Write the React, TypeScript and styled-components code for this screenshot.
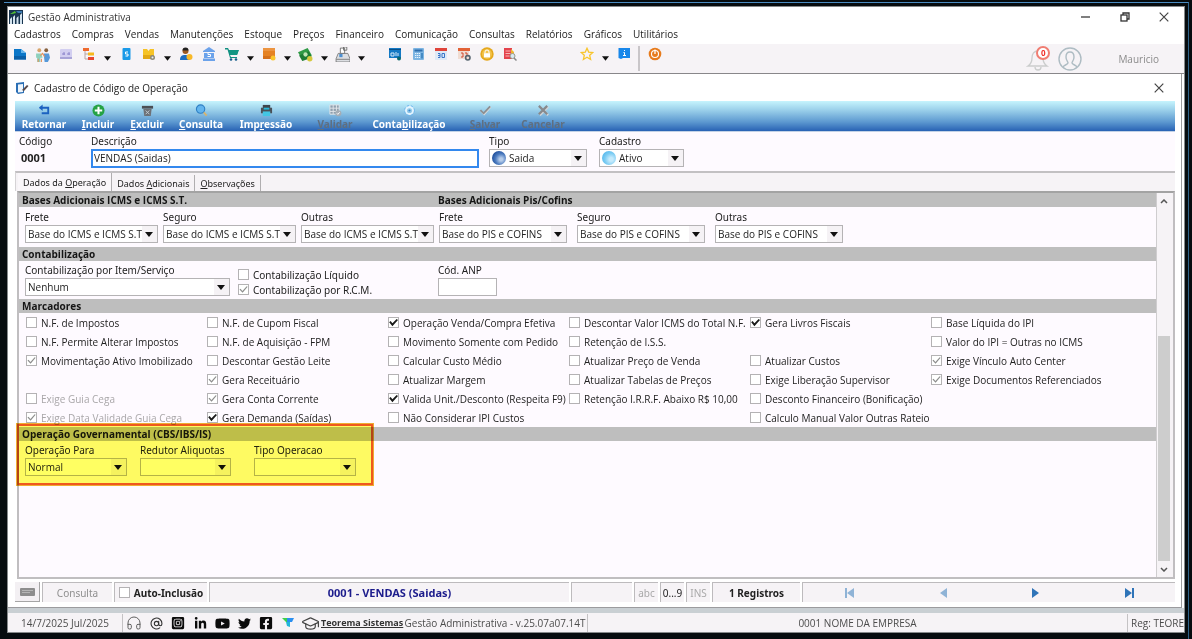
import React from "react";
import styled, { createGlobalStyle, css } from "styled-components";
import {
  FaLinkedinIn,
  FaYoutube,
  FaTwitter,
  FaFacebookSquare,
  FaInstagramSquare,
} from "react-icons/fa";
import { GraduationCap, Headphones, AtSign } from "lucide-react";

const FORM = '"Noto Sans", "Open Sans", sans-serif';
const SYSTEM = '"Open Sans", "Noto Sans", sans-serif';

const Global = createGlobalStyle`
  * { box-sizing: border-box; }
  body { margin: 0; background: #060c0f; color: #222; font: 10px/14px ${SYSTEM}; }
  button, input, select { font: inherit; color: inherit; margin: 0; padding: 0; border-radius: 0; }
  button { border: 0; background: none; }
  svg { display: block; flex: none; }
`;

/* ---------- frame ---------- */

const Desktop = styled.div`
  min-height: 100vh;
  padding: 2px 3px 0 4px;
  display: flex;
`;

const Bezel = styled.div`
  flex: 1;
  min-width: 0;
  display: flex;
  padding: 3px 3px 6px;
  border-top: 1px solid #4a8cc2;
  border-right: 1px solid #2f6288;
`;

const MainWindow = styled.div`
  flex: 1;
  min-width: 0;
  display: flex;
  flex-direction: column;
  background: #fff;
  border: 1px solid #85898b;
`;

const TitleBar = styled.header`
  display: flex;
  align-items: center;
  gap: 5px;
  height: 19px;
  padding: 0 15px 0 1px;
  color: #333;
`;

const Title = styled.h1`
  flex: 1;
  margin: 0;
  font: 400 10px/14px ${SYSTEM};
`;

const Controls = styled.div`
  display: flex;
  gap: 29px;
  color: #444;
`;

const MenuBar = styled.nav`
  display: flex;
  align-items: flex-start;
  gap: 11px;
  height: 18px;
  padding: 0 6px;
  line-height: 17px;
`;

const MenuItem = styled.button`
  white-space: nowrap;
`;

const ToolBar = styled.div`
  display: flex;
  height: 30px;
  padding-right: 25px;
  background: #f6f3f6;
  border-bottom: 1px solid #88878a;
`;

const Tool = styled.button`
  width: 23px;
  height: 20px;
  display: grid;
  place-items: center;
`;

const DropTool = styled.button`
  width: 14px;
  height: 28px;
  display: grid;
  place-items: center;
`;

const Spacer = styled.div<{ $w?: number }>`
  ${(p) => (p.$w ? `width: ${p.$w}px;` : "flex: 1;")}
`;

const ToolDivider = styled.div`
  width: 2px;
  height: 25px;
  margin: 2px 3px 0;
  background: #c9c6c9;
`;

const Account = styled.div`
  display: flex;
  align-items: center;
  gap: 8px;
  color: #8b8b8b;
`;

const BellWrap = styled.div`
  position: relative;
`;

const BellBadge = styled.span`
  position: absolute;
  top: 0;
  right: 0;
  width: 14px;
  height: 14px;
  border: 2px solid #f07d72;
  border-radius: 50%;
  background: #fff;
  color: #f0302a;
  font: 700 8px/10px ${SYSTEM};
  text-align: center;
`;

const UserName = styled.span`
  padding-left: 28px;
`;

/* ---------- child window ---------- */

const Child = styled.section`
  flex: 1;
  display: flex;
  flex-direction: column;
  margin-right: 2px;
  padding: 0 6px 5px 7px;
  border-right: 1px solid #9b9b9e;
  border-bottom: 1px solid #9b9b9e;
`;

const ChildTitle = styled.header`
  display: flex;
  align-items: center;
  gap: 5px;
  height: 27px;
  padding: 0 11px 0 0;
`;

const ActionBar = styled.div`
  display: flex;
  height: 31px;
  background: linear-gradient(#c6f4fd 0%, #9bd0ea 30%, #5c98d0 70%, #2862b4 100%);
  border-bottom: 1px solid #c3d2e6;
`;

const Action = styled.button<{ $w: number }>`
  width: ${(p) => p.$w}px;
  display: flex;
  flex-direction: column;
  align-items: center;
  padding-top: 3px;
  color: #fff;
  font: 700 10px/12px ${FORM};
  white-space: nowrap;
  &:disabled {
    color: #5f6f80;
  }
  svg {
    margin-bottom: 1px;
  }
`;

const Record = styled.div`
  display: flex;
  align-items: flex-start;
  height: 39px;
  padding: 2px 4px 0;
  background: #fefaff;
`;

const Field = styled.label<{ $w?: number }>`
  display: flex;
  flex-direction: column;
  ${(p) => p.$w && `width: ${p.$w}px;`}
  font-family: ${FORM};
  line-height: 15px;
  white-space: nowrap;
`;

const Code = styled.output`
  font: 700 11px/18px ${SYSTEM};
  padding-left: 2px;
`;

const DescInput = styled.input`
  width: 388px;
  height: 19px;
  padding: 0 1px 1px;
  border: 2px solid #3388ee;
  outline: 0;
  background: #fff;
  font-family: ${SYSTEM};
`;

const SelectBox = styled.span<{ $w: number }>`
  display: grid;
  grid-template-columns: auto 1fr 16px;
  align-items: center;
  width: ${(p) => p.$w}px;
  height: 18px;
  background: linear-gradient(to left, #f5f2f5 15px, #fff 15px);
  border: 1px solid #b5b3b5;
  > svg {
    grid-row: 1;
    grid-column: 3;
    justify-self: center;
    pointer-events: none;
  }
`;

const NativeSelect = styled.select<{ $pad: number }>`
  grid-row: 1;
  grid-column: 1 / -1;
  width: 100%;
  height: 16px;
  padding: 0 12px 0 ${(p) => p.$pad}px;
  appearance: none;
  border: 0;
  outline: 0;
  background: transparent;
  font-family: ${SYSTEM};
  line-height: 16px;
`;

const Ball = styled.span<{ $tone: string }>`
  grid-row: 1;
  grid-column: 1;
  width: 14px;
  height: 14px;
  margin-left: 2px;
  border-radius: 50%;
  background: ${(p) => p.$tone};
`;

/* ---------- tabs ---------- */

const Tabs = styled.div`
  display: flex;
  align-items: flex-end;
  height: 20px;
  padding-left: 2px;
  border-top: 2px solid #c2c0c2;
  border-left: 1px solid #d5d3d5;
  background: #f6f3f6;
`;

const Tab = styled.button<{ $active?: boolean }>`
  height: ${(p) => (p.$active ? 18 : 16)}px;
  padding: 0 5px;
  border-right: 1px solid #b0aeb0;
  font: 9px/15px ${FORM};
  white-space: nowrap;
  background: ${(p) => (p.$active ? "#faf7fa" : "transparent")};
`;

const Pane = styled.div`
  flex: 1;
  display: flex;
  margin-left: 2px;
  background: #fefaff;
  border: 2px solid #c0bec0;
  border-top-color: #a3a3a3;
`;

const Body = styled.div`
  flex: 1;
  min-width: 0;
  border-right: 1px solid #cfcdcf;
`;

const Bar = styled.h2`
  display: flex;
  height: 14px;
  margin: 0;
  padding-left: 3px;
  background: #bebebe;
  font: 700 10px/14px ${SYSTEM};
  color: #151515;
`;

const BarPart = styled.span<{ $w?: number }>`
  ${(p) => p.$w && `width: ${p.$w}px;`}
`;

const Row = styled.div<{ $h: number; $top?: number }>`
  display: flex;
  align-items: flex-start;
  height: ${(p) => p.$h}px;
  padding: ${(p) => p.$top || 2}px 0 0 6px;
`;

const CheckStack = styled.div`
  display: flex;
  flex-direction: column;
  width: 200px;
  padding-top: 4px;
  font-family: ${FORM};
`;

const CheckLabel = styled.label<{ $dim?: boolean; $tall?: boolean }>`
  display: flex;
  align-items: center;
  gap: 4px;
  height: ${(p) => (p.$tall ? 19 : 15)}px;
  white-space: nowrap;
  ${(p) => p.$dim && "color: #a9a7a9;"}
`;

const Box = styled.input<{ $grey?: boolean }>`
  appearance: none;
  flex: none;
  width: 11px;
  height: 11px;
  border: 1px solid #b4b2b4;
  background: #fff;
  display: grid;
  place-items: center;
  &:checked::after {
    content: "";
    width: 9px;
    height: 8px;
    background: ${(p) => (p.$grey ? "#8d8d8d" : "#1a1a1a")};
    clip-path: ${(p) =>
      p.$grey
        ? "polygon(5% 50%, 17% 40%, 38% 68%, 85% 8%, 96% 16%, 40% 92%)"
        : "polygon(2% 48%, 18% 32%, 38% 58%, 85% 5%, 100% 18%, 38% 98%)"};
  }
`;

const Marks = styled.div`
  display: grid;
  grid-template-columns: repeat(6, 181px);
  grid-auto-rows: 19px;
  padding-left: 7px;
`;

const Gov = styled.section`
  position: relative;
`;

const Highlight = styled.div`
  position: absolute;
  left: -3px;
  top: -4px;
  width: 358px;
  height: 63px;
  border: 1px solid #f0b030;
  box-shadow: inset 0 0 0 2px #f05a1e;
  background: #ffff62;
  mix-blend-mode: multiply;
  pointer-events: none;
`;

const Scroll = styled.div`
  width: 16px;
  padding-right: 2px;
  display: flex;
  flex-direction: column;
  background: #f6f3f6;
`;

const ScrollButton = styled.button`
  height: 16px;
  display: grid;
  place-items: center;
`;

const Track = styled.div`
  flex: 1;
  display: flex;
  flex-direction: column;
  justify-content: flex-end;
`;

const Thumb = styled.div`
  height: 64%;
  margin: 0 1px;
  background: #cdcdcd;
`;

/* ---------- footer bars ---------- */

const RecordBar = styled.div`
  display: flex;
  gap: 2px;
  height: 20px;
  margin-top: 3px;
`;

const sunken = css`
  border-top: 1px solid #bdbbbd;
  border-left: 1px solid #bdbbbd;
  background: #f6f3f6;
`;

const Cell = styled.div<{ $w: number; $tone?: string; $bold?: boolean; $large?: boolean }>`
  ${sunken}
  width: ${(p) => p.$w}px;
  display: flex;
  align-items: center;
  justify-content: center;
  color: ${(p) => p.$tone || "#222"};
  font-family: ${FORM};
  font-size: ${(p) => (p.$large ? 11 : 10)}px;
  font-weight: ${(p) => (p.$bold ? 700 : 400)};
  white-space: nowrap;
`;

const KeyButton = styled.button`
  width: 25px;
  display: grid;
  place-items: center;
  background: #f3f0f3;
  border-right: 1px solid #a5a5a5;
  border-bottom: 1px solid #a5a5a5;
`;

const Nav = styled.div`
  ${sunken}
  flex: 1;
  display: grid;
  grid-template-columns: repeat(4, 1fr);
  place-items: center;
`;

const StatusBar = styled.footer`
  display: flex;
  height: 24px;
  padding-top: 1px;
  align-items: center;
  border-top: 5px solid #c9cfd3;
  background: #f6f3f6;
  color: #4c4c4c;
  white-space: nowrap;
  overflow: hidden;
`;

const StatusCell = styled.div<{ $w?: number }>`
  ${(p) => (p.$w ? `width: ${p.$w}px;` : "flex: 1;")}
  flex-shrink: 0;
  height: 18px;
  line-height: 18px;
  text-align: center;
  border-right: 1px solid #c4c2c4;
`;

const Social = styled.div`
  display: grid;
  grid-template-columns: repeat(9, 22px);
  place-items: center;
  color: #0c0c0c;
  a {
    color: inherit;
  }
`;

const Brand = styled.a`
  width: 82px;
  flex: none;
  color: #333;
  font-size: 9px;
  font-weight: 700;
`;

const AnpInput = styled.input`
  width: 59px;
  height: 18px;
  border: 1px solid #b5b3b5;
  background: #fff;
`;

const Registration = styled.span`
  width: 56px;
  flex: none;
  padding-left: 3px;
`;

/* ---------- drawings ---------- */

const Caret = ({ w = 8 }: { w?: number }) => (
  <svg width={w} height="5" viewBox="0 0 8 5"><path d="M0 0h8L4 5z" fill="#111" /></svg>
);

const Cross = () => (
  <svg width="10" height="10" viewBox="0 0 10 10" fill="none" stroke="#444" strokeWidth="1.200"><path d="M.7.7l8.600 8.600M9.300.7L.7 9.300" /></svg>
);

const I = ({ children, s = 14 }: { children: React.ReactNode; s?: number }) => (
  <svg width={s} height={s} viewBox="0 0 14 14">{children}</svg>
);

const AppLogo = () => (
  <svg width="14" height="14" viewBox="0 0 14 14">
    <rect width="14" height="14" fill="#17344f" />
    <path d="M1 14V9l2-2v7zM4 14V7l2-2v9zM7.500 14V8l2-2v8zM11 14V5l2-2v11z" fill="#d5e4ef" />
    <path d="M1 4l5-3 1 2-4 1z" fill="#52c234" />
    <path d="M7 1h6v2H9z" fill="#3b7ab0" />
  </svg>
);

const icons = {
  page: <I><path d="M1 2h7l5 4v6.500H1z" fill="#0b76c8" /><path d="M8 2l5 4H8z" fill="#65b5ec" /><path d="M1 9h12v3.500H1z" fill="#0a5fa8" /></I>,
  people: <I s={15}><circle cx="4" cy="3" r="1.800" fill="#d8a46a" /><circle cx="10.500" cy="3" r="1.800" fill="#87613f" /><path d="M1 6h5l1 4H5v4H2v-4H1z" fill="#8fd0bd" /><path d="M8 6h5l1 4-2 4H9z" fill="#5698d8" /><path d="M5 8l2-2 2 3M3 11v3M6 11v3" stroke="#e8925a" fill="none" /></I>,
  card: <I><rect x="1" y="2" width="12" height="10" rx="1" fill="#d2cef0" /><path d="M1 11h12" stroke="#9a94cf" strokeWidth="1.500" /><path d="M3 7h3M8 7h3M5 5v3M10 5v3" stroke="#8c84cb" /></I>,
  tree: <I><path d="M3 3v9h4M3 7h5" stroke="#b7a4a0" fill="none" /><rect x="1" y="1" width="6" height="3" fill="#ef6a2e" /><rect x="6" y="5.500" width="6" height="3" fill="#f6b91c" /><rect x="6" y="10" width="6" height="3" fill="#e8472f" /></I>,
  phone: <I><rect x="3.500" y="1" width="8" height="12" rx="1" fill="#1a9ae8" /><path d="M9 5H6.500v2H9v2H6.500" stroke="#fff" fill="none" /></I>,
  box: <I><path d="M1 2h4l1.500 2L8 2h4v10H1z" fill="#f6c326" /><path d="M1 8h11v4H1z" fill="#e2a714" /><circle cx="10.500" cy="10.500" r="2.500" fill="#8d8a78" /><circle cx="10.500" cy="10.500" r="1" fill="#eee" /></I>,
  user: <I><circle cx="6.500" cy="4" r="3" fill="#9c5a21" /><path d="M3.500 3.500a3 3 0 016 0z" fill="#222" /><path d="M1 13c0-4 2-5 5-5s5 1 5 5z" fill="#1c6dc0" /><circle cx="10.500" cy="10" r="3" fill="#f8b928" /></I>,
  bank: <I><path d="M1 4l6-4 6 4v1H1zM2 6h10v5H2zM1 11.500h12V14H1z" fill="#6ba2ea" /><path d="M8.500 5.500H6v2h2.500v2H5.500" stroke="#fff" fill="none" /></I>,
  cart: <I><path d="M0 1h3l1 2h10l-2 5H5L6 10h6v1H5L2.500 2.500H0z" fill="#0f8f80" /><path d="M4 3h9.500L12 8H5z" fill="#129583" /><circle cx="6" cy="12.500" r="1.300" fill="#155d8a" /><circle cx="11" cy="12.500" r="1.300" fill="#155d8a" /></I>,
  crate: <I><rect x="1" y="1" width="12" height="11" rx="1" fill="#e58224" /><path d="M1 9h12v3H1z" fill="#d4701c" /><path d="M1 1h12v3H1z" fill="#ec9440" /><circle cx="11" cy="11" r="2.500" fill="#fbc52d" /></I>,
  cash: <I s={15}><path d="M0 5l9-4 4 7-9 4z" fill="#2f9a45" /><path d="M1 8l9-4 3 6-9 3z" fill="#1d7c33" /><circle cx="7" cy="7" r="2" fill="#bfe6b5" /><circle cx="11" cy="11" r="2.500" fill="#d5c83c" /></I>,
  register: <I s={15}><path d="M5 1h4v5H5zM8 0h3v3H8z" fill="#fff" stroke="#555" strokeWidth=".7" /><path d="M3 6h9l2 5v3H1v-3z" fill="#dcdee2" stroke="#666" strokeWidth=".7" /><path d="M4 6.500h3v3H4z" fill="#4d8fd0" /><path d="M1 11.500h13" stroke="#888" /></I>,
  sys: <I><rect x="1" y="1" width="12" height="10" fill="#1479c4" /><path d="M1 2.500h12" stroke="#0a4f88" /><path d="M3 6h3v3H3zM8 5v4M10 6v3" stroke="#d5ebfa" fill="none" /><circle cx="11" cy="11.500" r="2" fill="#0c6870" /></I>,
  calc: <I><rect x="2" y="1" width="11" height="12" rx="1" fill="#7db5e2" /><rect x="3.500" y="2.500" width="8" height="2" fill="#2e6fae" /><path d="M4 6.500h5M4 8.500h5M4 10.500h5" stroke="#e4f3ff" strokeDasharray="1.300 .6" /><path d="M11 6v5.500" stroke="#2d77b8" strokeWidth="1.400" /></I>,
  cal: <I><path d="M1 3h12v10H1z" fill="#dfe9f6" /><path d="M1 1h12v3H1z" fill="#e0443a" /><path d="M4 6.500h2v4H4M6 8.500H4M8 6.500h2.500v4H8z" stroke="#3874c8" fill="none" /></I>,
  calgear: <I><path d="M1 3h11v9H1z" fill="#f0dcd2" /><path d="M1 1h12v3H1z" fill="#e26236" /><path d="M4 6h2v4H4M8 6h2v3" stroke="#d04b2e" fill="none" /><circle cx="10.800" cy="10.800" r="2.200" fill="none" stroke="#56646e" strokeWidth="1.600" /></I>,
  lock: <I><circle cx="7" cy="7" r="6.700" fill="#e5a81c" /><circle cx="7" cy="7" r="5" fill="#f2c34c" /><rect x="4" y="6.200" width="6" height="4.200" fill="#fff" /><path d="M5 6V5a2 2 0 014 0v1" stroke="#fff" fill="none" /></I>,
  search: <I><path d="M1 1h8v11H1z" fill="#e4434d" /><path d="M2.500 4h5M2.500 6.500h5M2.500 9h4" stroke="#f9b6b6" /><path d="M8 2l3 3v4H8z" fill="#f0b52d" /><circle cx="9.500" cy="9" r="2.500" fill="#d8e8f3" stroke="#998" /><path d="M11 11l2.500 2.500" stroke="#888" strokeWidth="1.500" /></I>,
  star: <I><path d="M7 1.300l1.700 3.800 4 .4-3 2.800.9 4.200L7 10.300l-3.600 2.200.9-4.200-3-2.800 4-.4z" fill="none" stroke="#f8c52c" strokeWidth="1.300" /></I>,
  info: <I><path d="M1.500 1h11.500v10H6l-2 1-2.500-1z" fill="#1887ea" /><path d="M6.500 5.500h1v3M6 8.500h3M7.500 3v1" stroke="#fff" fill="none" /></I>,
  power: <I><circle cx="7" cy="7" r="6.300" fill="#e77b1c" /><circle cx="7" cy="7" r="3.500" fill="none" stroke="#fff" strokeWidth="1.100" /><path d="M7 2.500V7" stroke="#fff" strokeWidth="1.300" /></I>,
};

const actionIcons = {
  back: <I s={13}><path d="M2 4h9v6H4" fill="none" stroke="#1c62c0" strokeWidth="2" /><path d="M1 4l4-3.500v7z" fill="#1c62c0" /></I>,
  add: <I s={13}><circle cx="7" cy="7" r="6.500" fill="#25a244" /><path d="M7 3v8M3 7h8" stroke="#fff" strokeWidth="2.200" /></I>,
  bin: <I s={13}><path d="M1 2h12v3H1z" fill="#4b4f54" /><path d="M2.500 5h9l-1 8h-7z" fill="#6d7177" /><path d="M5 7l4 4M9 7l-4 4" stroke="#c3cdd5" /></I>,
  find: <I s={13}><circle cx="6" cy="5.500" r="4.500" fill="#63b5ee" stroke="#2d7fc4" strokeWidth="1.200" /><path d="M9.500 9l3 3.500" stroke="#d7b36c" strokeWidth="2" /></I>,
  print: <I s={13}><path d="M3 1h8v4H3z" fill="#3e454c" /><path d="M1 4h12v6H1z" fill="#4a5057" /><path d="M4 4h6v2H4z" fill="#25b7d9" /><path d="M3 8h8v5H3z" fill="#43c6e4" /></I>,
  grid: <I s={13}><path d="M1 1h10v10H1z" fill="#8fa0ae" /><path d="M1 1h10v10H1zM1 4.500h10M1 8h10M4.500 1v10M8 1v10" fill="none" stroke="#e2e6ea" /><circle cx="10" cy="10" r="3.300" fill="#a5adb5" /><path d="M8.500 10l1 1.200 2-2.300" stroke="#fff" fill="none" /></I>,
  gear: <I s={13}><circle cx="7" cy="7" r="3.800" fill="none" stroke="#e4f4ff" strokeWidth="2" /><circle cx="7" cy="7" r="5.400" fill="none" stroke="#6cb4ee" strokeDasharray="2.200 2.200" /><circle cx="7" cy="7" r="1.200" fill="#3c87d0" /></I>,
  ok: <I s={13}><path d="M2 7l3.500 4L12.500 3" fill="none" stroke="#dcdcdc" strokeWidth="2" /><path d="M1.500 6.500L5 10 12 2.500" fill="none" stroke="#8c8f92" strokeWidth="2" /></I>,
  no: <I s={13}><path d="M3 3l9 9M12 3l-9 9" stroke="#d4d6d8" strokeWidth="2.400" /><path d="M2 2l9 9M11 2l-9 9" stroke="#878a8d" strokeWidth="2.400" /></I>,
};

/* ---------- data ---------- */

const menus = ["Cadastros", "Compras", "Vendas", "Manutenções", "Estoque", "Preços", "Financeiro", "Comunicação", "Consultas", "Relatórios", "Gráficos", "Utilitários"];

/* "v" is a drop-down arrow, a number is an empty stretch */
type ToolEntry = keyof typeof icons | "v" | number;
const tools: ToolEntry[] = ["page", "people", "card", "tree", "v", "phone", "box", "v", "user", "bank", "cart", "v", "crate", "v", "cash", "v", "register", "v", 15, "sys", "calc", "cal", "calgear", "lock", "search", 54, "star", "v", "info"];

const actions: [string, number, number, keyof typeof actionIcons, boolean][] = [
  ["Retornar", -1, 58, "back", false],
  ["Incluir", 0, 50, "add", false],
  ["Excluir", 0, 48, "bin", false],
  ["Consulta", 0, 60, "find", false],
  ["Impressão", 3, 70, "print", false],
  ["Validar", 0, 68, "grid", true],
  ["Contabilização", 5, 80, "gear", false],
  ["Salvar", 0, 72, "ok", true],
  ["Cancelar", -1, 44, "no", true],
];

/* off: empty, on: ticked, grey: inherited tick; "dim" variants are unavailable */
type State = "off" | "on" | "grey" | "dimOff" | "dimOn";
const marks: ([string, State] | null)[] = [
  ["N.F. de Impostos", "off"], ["N.F. de Cupom Fiscal", "off"], ["Operação Venda/Compra Efetiva", "on"], ["Descontar Valor ICMS do Total N.F.", "off"], ["Gera Livros Fiscais", "on"], ["Base Líquida do IPI", "off"],
  ["N.F. Permite Alterar Impostos", "off"], ["N.F. de Aquisição - FPM", "off"], ["Movimento Somente com Pedido", "off"], ["Retenção de I.S.S.", "off"], null, ["Valor do IPI = Outras no ICMS", "off"],
  ["Movimentação Ativo Imobilizado", "grey"], ["Descontar Gestão Leite", "off"], ["Calcular Custo Médio", "off"], ["Atualizar Preço de Venda", "off"], ["Atualizar Custos", "off"], ["Exige Vínculo Auto Center", "grey"],
  null, ["Gera Receituário", "grey"], ["Atualizar Margem", "off"], ["Atualizar Tabelas de Preços", "off"], ["Exige Liberação Supervisor", "off"], ["Exige Documentos Referenciados", "grey"],
  ["Exige Guia Cega", "dimOff"], ["Gera Conta Corrente", "grey"], ["Valida Unit./Desconto (Respeita F9)", "on"], ["Retenção I.R.R.F. Abaixo R$ 10,00", "off"], ["Desconto Financeiro (Bonificação)", "off"], null,
  ["Exige Data Validade Guia Cega", "dimOn"], ["Gera Demanda (Saídas)", "on"], ["Não Considerar IPI Custos", "off"], null, ["Calculo Manual Valor Outras Rateio", "off"], null,
];

const bases: [string, string, number][] = [
  ["Frete", "Base do ICMS e ICMS S.T", 133],
  ["Seguro", "Base do ICMS e ICMS S.T", 133],
  ["Outras", "Base do ICMS e ICMS S.T", 133],
  ["Frete", "Base do PIS e COFINS", 128],
  ["Seguro", "Base do PIS e COFINS", 128],
  ["Outras", "Base do PIS e COFINS", 128],
];

/* ---------- pieces ---------- */

const Hot = ({ text, at }: { text: string; at: number }) =>
  at < 0 ? <span>{text}</span> : <span>{text.slice(0, at)}<u>{text[at]}</u>{text.slice(at + 1)}</span>;

const Combo = ({ w, value, ball }: { w: number; value: string; ball?: string }) => (
  <SelectBox $w={w}>
    {ball && <Ball $tone={ball} />}
    <NativeSelect $pad={ball ? 19 : 2} defaultValue={value}>
      <option>{value}</option>
    </NativeSelect>
    <Caret />
  </SelectBox>
);

const Check = ({ text, state, tall }: { text: string; state: State; tall?: boolean }) => (
  <CheckLabel $dim={state.startsWith("dim")} $tall={tall}>
    <Box type="checkbox" defaultChecked={/on|grey|On/.test(state)} $grey={state !== "on"} disabled={state.startsWith("dim")} />
    {text}
  </CheckLabel>
);

const NavArrow = ({ back, edge }: { back?: boolean; edge?: boolean }) => (
  <svg width="10" height="10" viewBox="0 0 10 10" fill={back ? "#8fb3d6" : "#2f74b8"}>
    {back ? <path d="M9 0v10L2 5z" /> : <path d="M1 0v10l7-5z" />}
    {edge && <rect x={back ? 0 : 8} width="2" height="10" />}
  </svg>
);

export default function App() {
  return (
    <>
      <Global />
      <Desktop>
        <Bezel>
          <MainWindow>
            <TitleBar>
              <AppLogo />
              <Title>Gestão Administrativa</Title>
              <Controls>
                <button aria-label="Minimizar"><svg width="10" height="10" viewBox="0 0 10 10"><path d="M0 5h9" stroke="#555" strokeWidth="1.500" /></svg></button>
                <button aria-label="Restaurar"><svg width="10" height="10" viewBox="0 0 10 10" fill="none" stroke="#333" strokeWidth="1.300"><rect x="1" y="3" width="6" height="6" /><path d="M3 3V1h6v6H7" /></svg></button>
                <button aria-label="Fechar"><Cross /></button>
              </Controls>
            </TitleBar>
            <MenuBar>{menus.map((m) => <MenuItem key={m}>{m}</MenuItem>)}</MenuBar>
            <ToolBar>
              {tools.map((t, i) =>
                typeof t === "number" ? <Spacer key={i} $w={t} /> :
                t === "v" ? <DropTool key={i} aria-label="Mais opções"><Caret w={7} /></DropTool> :
                <Tool key={i} aria-label={t}>{icons[t]}</Tool>
              )}
              <ToolDivider />
              <Tool aria-label="Sair">{icons.power}</Tool>
              <Spacer />
              <Account>
                <BellWrap>
                  <svg width="24" height="26" viewBox="0 0 24 26" fill="none" stroke="#cbcdcd" strokeWidth="1.300"><path d="M2 20c3-2 4-4 4-8s2-7 6-7 5 3 5 7 1 6 4 8zM9 21a3 3 0 006 0" /></svg>
                  <BellBadge>0</BellBadge>
                </BellWrap>
                <svg width="24" height="24" viewBox="0 0 24 24" fill="none" stroke="#aebcc3" strokeWidth="1.400"><circle cx="12" cy="12" r="11" /><path d="M5 20c1-2 4-2 5-4 0-2-2-2-2-6 0-3 1-5 4-5s4 2 4 5c0 4-2 4-2 6 1 2 4 2 5 4" /></svg>
                <UserName>Mauricio</UserName>
              </Account>
            </ToolBar>

            <Child>
              <ChildTitle>
                <svg width="14" height="14" viewBox="0 0 14 14"><path d="M1 2l8-1v11l-6 1-2-2z" fill="#2b6fb5" /><path d="M3 3.500l5-.5v8l-5 .5z" fill="#eef5fb" /><path d="M7 9l5-5 1.500 1L9 10z" fill="#5a4a48" /></svg>
                <Title as="h2">Cadastro de Código de Operação</Title>
                <button aria-label="Fechar cadastro"><Cross /></button>
              </ChildTitle>
              <ActionBar>
                {actions.map(([text, at, w, icon, off]) => (
                  <Action key={text} $w={w} disabled={off}>{actionIcons[icon]}<Hot text={text} at={at} /></Action>
                ))}
              </ActionBar>
              <Record>
                <Field $w={72}>Código<Code>0001</Code></Field>
                <Field $w={398}>Descrição<DescInput defaultValue="VENDAS (Saidas)" /></Field>
                <Field $w={110}>Tipo<Combo w={98} value="Saida" ball="radial-gradient(circle at 65% 60%, #b7cdea 0 12%, #4d7cc0 45%, #1f4f9c 75%)" /></Field>
                <Field>Cadastro<Combo w={85} value="Ativo" ball="radial-gradient(circle at 65% 60%, #c5eafc 0 15%, #7cccf3 50%, #55b8ec 80%)" /></Field>
              </Record>
              <Tabs role="tablist">
                <Tab role="tab" $active><Hot text="Dados da Operação" at={9} /></Tab>
                <Tab role="tab"><Hot text="Dados Adicionais" at={6} /></Tab>
                <Tab role="tab"><Hot text="Observações" at={0} /></Tab>
              </Tabs>
              <Pane>
                <Body>
                  <Bar><BarPart $w={416}>Bases Adicionais ICMS e ICMS S.T.</BarPart><BarPart>Bases Adicionais Pis/Cofins</BarPart></Bar>
                  <Row $h={40} $top={3}>
                    {bases.map(([label, value, w], i) => (
                      <Field key={i} $w={138}>{label}<Combo w={w} value={value} /></Field>
                    ))}
                  </Row>
                  <Bar>Contabilização</Bar>
                  <Row $h={38}>
                    <Field $w={213}>Contabilização por Item/Serviço<Combo w={205} value="Nenhum" /></Field>
                    <CheckStack>
                      <Check text="Contabilização Líquido" state="off" />
                      <Check text="Contabilização por R.C.M." state="grey" />
                    </CheckStack>
                    <Field>Cód. ANP<AnpInput /></Field>
                  </Row>
                  <Bar>Marcadores</Bar>
                  <Marks>
                    {marks.map((m, i) => (m ? <Check key={i} text={m[0]} state={m[1]} tall /> : <span key={i} />))}
                  </Marks>
                  <Gov>
                    <Bar>Operação Governamental (CBS/IBS/IS)</Bar>
                    <Row $h={39}>
                      <Field $w={115}>Operação Para<Combo w={102} value="Normal" /></Field>
                      <Field $w={114}>Redutor Aliquotas<Combo w={91} value="" /></Field>
                      <Field>Tipo Operacao<Combo w={102} value="" /></Field>
                    </Row>
                    <Highlight />
                  </Gov>
                </Body>
                <Scroll>
                  <ScrollButton aria-label="Subir"><svg width="8" height="5" viewBox="0 0 8 5"><path d="M1 4l3-3 3 3" fill="none" stroke="#555" strokeWidth="1.500" /></svg></ScrollButton>
                  <Track><Thumb /></Track>
                  <ScrollButton aria-label="Descer"><svg width="8" height="5" viewBox="0 0 8 5"><path d="M1 1l3 3 3-3" fill="none" stroke="#555" strokeWidth="1.500" /></svg></ScrollButton>
                </Scroll>
              </Pane>
              <RecordBar>
                <KeyButton aria-label="Teclado"><svg width="15" height="8" viewBox="0 0 15 8"><rect width="15" height="8" rx="1" fill="#8d8d8d" /><path d="M2 2.500h11M2 4.500h8" stroke="#b5b5b5" /></svg></KeyButton>
                <Cell $w={70} $tone="#8f8f8f">Consulta</Cell>
                <Cell $w={93} $bold><CheckLabel><Box type="checkbox" />Auto-Inclusão</CheckLabel></Cell>
                <Cell $w={360} $bold $large $tone="#1c1c8c">0001 - VENDAS (Saidas)</Cell>
                <Cell $w={61} />
                <Cell $w={24} $tone="#a8a8a8">abc</Cell>
                <Cell $w={24}>0...9</Cell>
                <Cell $w={24} $tone="#a8a8a8">INS</Cell>
                <Cell $w={88} $bold>1 Registros</Cell>
                <Nav>
                  <button aria-label="Primeiro"><NavArrow back edge /></button>
                  <button aria-label="Anterior"><NavArrow back /></button>
                  <button aria-label="Próximo"><NavArrow /></button>
                  <button aria-label="Último"><NavArrow edge /></button>
                </Nav>
              </RecordBar>
            </Child>

            <StatusBar>
              <StatusCell $w={115}>14/7/2025 Jul/2025</StatusCell>
              <Social>
                <a href="#suporte" aria-label="Suporte"><Headphones size={16} strokeWidth={1.4} color="#555" /></a>
                <a href="#email" aria-label="E-mail"><AtSign size={13} strokeWidth={2} color="#333" /></a>
                <a href="#instagram" aria-label="Instagram"><FaInstagramSquare size={14} /></a>
                <a href="#linkedin" aria-label="LinkedIn"><FaLinkedinIn size={13} /></a>
                <a href="#youtube" aria-label="YouTube"><FaYoutube size={15} /></a>
                <a href="#twitter" aria-label="Twitter"><FaTwitter size={13} /></a>
                <a href="#facebook" aria-label="Facebook"><FaFacebookSquare size={14} /></a>
                <a href="#teorema" aria-label="Teorema"><svg width="12" height="10" viewBox="0 0 12 10"><path d="M0 0h7v4H4z" fill="#3ed04c" /><path d="M5 0h7l-2 4H5z" fill="#2a8ff0" /><path d="M4 4h4v5l-3-1z" fill="#23b6d8" /></svg></a>
                <a href="#cursos" aria-label="Cursos"><GraduationCap size={19} strokeWidth={1.5} color="#444" /></a>
              </Social>
              <Brand href="#teorema-sistemas">Teorema Sistemas</Brand>
              <StatusCell $w={185}>Gestão Administrativa - v.25.07a07.14T</StatusCell>
              <StatusCell>0001 NOME DA EMPRESA</StatusCell>
              <Registration>Reg: TEORE</Registration>
            </StatusBar>
          </MainWindow>
        </Bezel>
      </Desktop>
    </>
  );
}
